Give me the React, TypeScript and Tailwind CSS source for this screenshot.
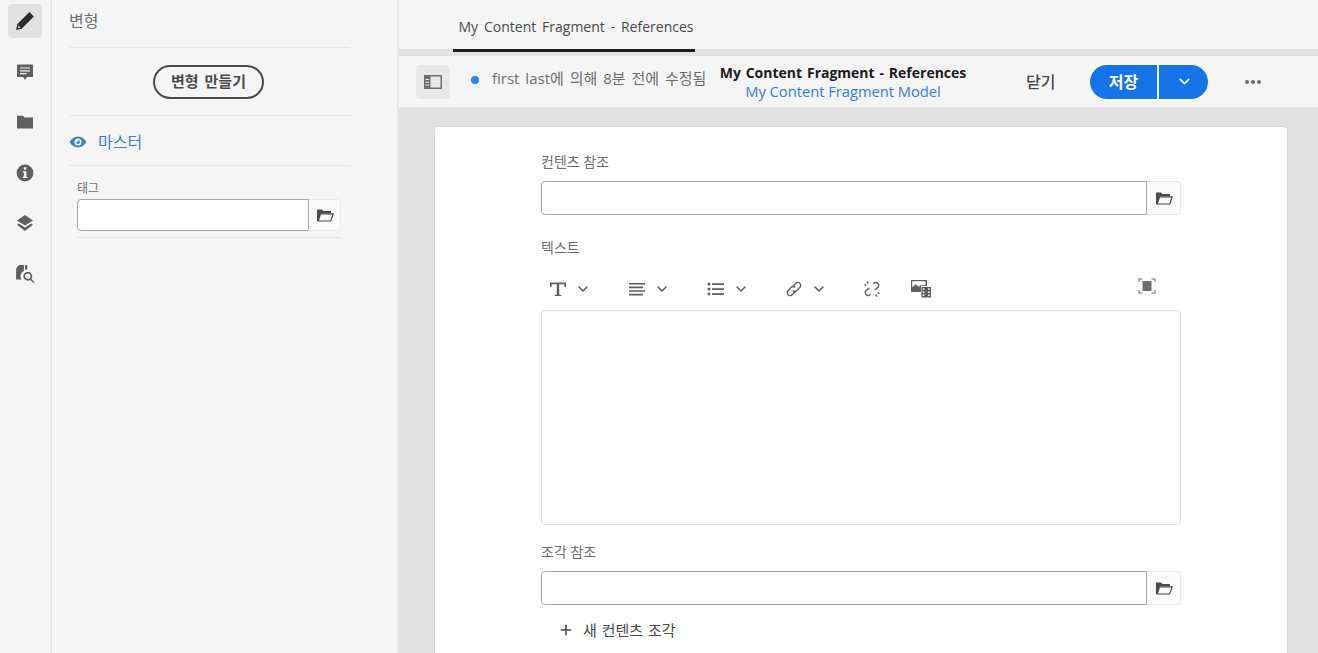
import { ChevronDown, Plus } from "lucide-react";
import type { ReactNode } from "react";

const font = "font-['Open_Sans','Noto_Sans_CJK_KR',sans-serif]";

function Svg({ size = 18, className = "", children }: { size?: number; className?: string; children: ReactNode }) {
  return (
    <svg width={size} height={size} viewBox="0 0 18 18" fill="currentColor" className={className}>
      {children}
    </svg>
  );
}

function FolderOpen({ className = "" }: { className?: string }) {
  return (
    <Svg className={className}>
      <path d="M1 15V3.500h5l1.400 1.600H15v2.200H4.600L2.300 15z" />
      <path fillRule="evenodd" d="M4.200 7.200H18L15.200 15.600H1.200zM5 8.400 2.900 14.400h11.400l2-6z" />
    </Svg>
  );
}

function RailIcon({ children, active }: { children: ReactNode; active?: boolean }) {
  return (
    <div className={`flex h-[34px] w-[34px] items-center justify-center rounded ${active ? "bg-[#e1e1e1] text-[#2c2c2c]" : "text-[#5f5f5f]"}`}>
      {children}
    </div>
  );
}

function Rail() {
  return (
    <div className="flex w-[52px] shrink-0 flex-col items-center gap-[16.6px] border-r-2 border-[#e8e8e8] pt-[4px]">
      <RailIcon active>
        <Svg size={20}>
          <path d="M13 1 17 5 6 16 1 17 2 12zM3.200 13l-.6 2.400 2.400-.6z" />
        </Svg>
      </RailIcon>
      <RailIcon>
        <Svg>
          <path fillRule="evenodd" d="M1 1.500h16V14h-6l-2 3-2-3H1zM4 4.400v1.200h10V4.400zM4 7.200v1.200h10V7.200zM4 10v1.200h6.500V10z" />
        </Svg>
      </RailIcon>
      <RailIcon>
        <Svg>
          <path d="M1 15.500V2.800h6l1.600 1.800H17v10.900z" />
        </Svg>
      </RailIcon>
      <RailIcon>
        <Svg>
          <path fillRule="evenodd" d="M9 .600a8.400 8.400 0 1 1 0 16.800A8.400 8.400 0 0 1 9 .600zM7.800 3.200v2.500h2.500V3.200zM6.800 7.200v1.400h1.100v4.100H6.800v1.400h4.600v-1.400h-1V7.200z" />
        </Svg>
      </RailIcon>
      <RailIcon>
        <Svg>
          <path d="M9 1 17 6.400 9 11.600 1 6.400z" />
          <path d="M2.800 9.400 9 13.400l6.200-4L17 10.800 9 17 1 10.800z" />
        </Svg>
      </RailIcon>
      <RailIcon>
        <Svg size={20}>
          <path d="M3.500 1H8v5.200A5.600 5.600 0 0 0 5.600 14H1V4z" />
          <path d="M9 1h2v4h-2z" />
          <path fillRule="evenodd" d="M11.500 7a4 4 0 0 1 3.200 6.400l2.800 2.800-1 1-2.900-2.800A4 4 0 1 1 11.500 7zm0 1.500a2.500 2.500 0 1 0 0 5 2.500 2.500 0 0 0 0-5z" />
        </Svg>
      </RailIcon>
    </div>
  );
}

function TextField({ heightClass = "h-[34px]", folderClass = "w-[34px]" }: { heightClass?: string; folderClass?: string }) {
  return (
    <div className={`flex ${heightClass}`}>
      <div className="min-w-0 flex-1 rounded-l-[4px] border border-[#a8a8a8] bg-white" />
      <div className={`flex ${folderClass} items-center justify-center rounded-r-[4px] border border-l-0 border-[#eaeaea] bg-[#fafafa] text-[#4b4b4b]`}>
        <FolderOpen />
      </div>
    </div>
  );
}

function Sidebar() {
  return (
    <div className="flex w-[347px] shrink-0 flex-col border-r-2 border-[#e8e8e8] pl-[17px]">
      <div className="w-[281px]">
        <div className="flex h-[48px] items-start border-b border-[#e8e8e8] pt-[10px] text-[16px] leading-[22px] text-[#6e6e6e]">변형</div>
        <div className="flex h-[68px] items-center justify-center border-b border-[#e8e8e8]">
          <div className="-ml-[2px] flex h-[34px] w-[111px] items-center justify-center rounded-full border-2 border-[#4b4b4b] text-[15px] font-bold whitespace-nowrap text-[#4b4b4b] [word-spacing:2px]">
            변형 만들기
          </div>
        </div>
        <div className="flex h-[50px] items-center gap-[11px] border-b border-[#e8e8e8] pt-[2px] text-[16px] text-[#3a7fdc]">
          <Svg size={18}>
            <path fillRule="evenodd" d="M9 3.500c3.600 0 6.600 2.300 8.400 5.500-1.800 3.200-4.800 5.500-8.400 5.500S2.400 12.200.600 9C2.400 5.800 5.400 3.500 9 3.500zM9 5.400A3.600 3.600 0 1 0 9 12.600 3.600 3.600 0 0 0 9 5.400zM9 7a2 2 0 1 1-2 2c.6.400 1.400.300 1.800-.200.400-.500.500-1.200.200-1.800z" />
          </Svg>
          마스터
        </div>
        <div className="ml-[8px] w-[264px] border-b border-[#e8e8e8] pb-[6px]">
          <div className="pt-[15px] pb-[2px] text-[12px] leading-[16px] text-[#6e6e6e]">태그</div>
          <TextField heightClass="h-[32px]" folderClass="w-[32px]" />
        </div>
      </div>
    </div>
  );
}

function TopBars() {
  return (
    <>
      <div className="h-[49px] bg-[#f5f5f5] pl-[54px]">
        <div className="relative z-10 flex h-[52px] w-[242px] items-start justify-center border-b-[3px] border-[#1c1c1c] pt-[17px] pl-[4px] text-[14px] leading-[20px] whitespace-nowrap text-[#4b4b4b] [word-spacing:2.2px]">
          My Content Fragment - References
        </div>
      </div>
      <div className="h-[7px] bg-[#e1e1e1]" />
      <div className="flex h-[52px] items-center border-b border-[#e8e8e8] bg-[#f5f5f5] pl-[17px]">
        <div className="flex h-[34px] w-[34px] items-center justify-center rounded bg-[#e8e8e8] text-[#6e6e6e]">
          <svg width="20" height="16" viewBox="0 0 20 16" fill="currentColor">
            <path fillRule="evenodd" d="M1 1h18v14H1zM7.500 2.500v11H17.500v-11z" />
            <path fill="#e8e8e8" d="M2.500 5h3.500v1H2.500zM2.500 7.800h3.500v1H2.500zM2.500 10.600h3.500v1H2.500z" />
          </svg>
        </div>
        <div className="-mt-[4px] ml-[21px] h-[8px] w-[8px] rounded-full bg-[#2f80ed]" />
        <div className="-mt-[7px] ml-[13px] w-[227px] text-[15px] whitespace-nowrap text-[#6e6e6e] [word-spacing:2px]">first last에 의해 8분 전에 수정됨</div>
        <div className="w-[248px] text-center leading-[19px]">
          <div className="text-[14px] font-bold whitespace-nowrap text-[#1c1c1c] [word-spacing:1.2px]">My Content Fragment - References</div>
          <div className="text-[14.7px] whitespace-nowrap text-[#2f80ed]">My Content Fragment Model</div>
        </div>
        <div className="ml-[59px] w-[30px] text-[16px] font-medium whitespace-nowrap text-[#4b4b4b]">닫기</div>
        <div className="ml-[34px] flex h-[34px] w-[118px] text-white">
          <div className="flex w-[67px] items-center justify-center rounded-l-full bg-[#1473e6] text-[16px] font-bold">저장</div>
          <div className="ml-[1.5px] flex flex-1 items-center justify-center rounded-r-full bg-[#1473e6] pl-[3px]">
            <ChevronDown size={17} strokeWidth={2.5} />
          </div>
        </div>
        <div className="ml-[37px] flex gap-[2px]">
          <span className="h-[4px] w-[4px] rounded-full bg-[#6e6e6e]" />
          <span className="h-[4px] w-[4px] rounded-full bg-[#6e6e6e]" />
          <span className="h-[4px] w-[4px] rounded-full bg-[#6e6e6e]" />
        </div>
      </div>
    </>
  );
}

function ToolGroup({ children, className = "" }: { children: ReactNode; className?: string }) {
  return (
    <div className={`flex items-center gap-[8px] text-[#5f5f5f] ${className}`}>
      {children}
      <ChevronDown size={16} strokeWidth={2.4} />
    </div>
  );
}

function Toolbar() {
  return (
    <div className="flex h-[52px] items-center pt-[9px] pl-[8px] pr-[25px]">
      <ToolGroup className="w-[79px]">
        <Svg>
          <path d="M1 2.500h16v4.600h-1.300L15 4.200h-4.800v10.200l2 .7v1H5.800v-1l2-.7V4.200H3L2.300 7.100H1z" />
        </Svg>
      </ToolGroup>
      <ToolGroup className="w-[79px]">
        <Svg>
          <path d="M1 3h16v1.600H1zM1 6.600h14v1.600H1zM1 10.200h16v1.600H1zM1 13.800h14v1.600H1z" />
        </Svg>
      </ToolGroup>
      <ToolGroup className="w-[78px]">
        <Svg>
          <path d="M5 3.200h12v1.800H5zM5 8.200h12v1.800H5zM5 13.200h12v1.800H5z" />
          <circle cx="2" cy="4" r="1.500" />
          <circle cx="2" cy="9" r="1.500" />
          <circle cx="2" cy="14" r="1.500" />
        </Svg>
      </ToolGroup>
      <ToolGroup className="w-[78px]">
        <Svg>
          <g fill="none" stroke="currentColor" strokeWidth="1.400">
            <path d="M7.500 6.500 11.500 2.700a3 3 0 0 1 4 4L12 10.500a3 3 0 0 1-4.200 0" />
            <path d="M10.500 11.500 6.500 15.300a3 3 0 0 1-4-4L6 7.500a3 3 0 0 1 4.200 0" />
          </g>
        </Svg>
      </ToolGroup>
      <div className="flex w-[47px] text-[#5f5f5f]">
        <Svg>
          <g fill="none" stroke="currentColor" strokeWidth="1.400">
            <path d="M10.500 3.800 11.800 2.700a3 3 0 0 1 3.800 3.900L13.500 8.800a3 3 0 0 1-2 1" />
            <path d="M7.500 14.200 6.200 15.300a3 3 0 0 1-3.800-3.900L4.500 9.200a3 3 0 0 1 2-1" />
            <path d="M4 1.500 5.300 3.500M1.500 4.500 3.500 5.300M14 16.500 12.700 14.500M16.500 13.500 14.500 12.700" />
          </g>
        </Svg>
      </div>
      <div className="text-[#5f5f5f]">
        <svg width="22" height="20" viewBox="0 0 22 20" fill="currentColor">
          <path fillRule="evenodd" d="M1 1h16v6h-6v6H1zM2.200 2.200v6l3.500-3 3 2.500 2-1.500 4.800.1V2.200z" />
          <path fillRule="evenodd" d="M11.500 8H21v10.500h-9.500zM12.800 9.200v1.500h1.500V9.200zM18.200 9.200v1.500h1.500V9.200zM12.800 12.400v1.500h1.500v-1.500zM18.200 12.400v1.500h1.500v-1.500zM12.800 15.600v1.500h1.500v-1.500zM18.200 15.600v1.500h1.500v-1.500z" />
        </svg>
      </div>
      <div className="ml-auto -mt-[6px] text-[#6e6e6e]">
        <svg width="18" height="16" viewBox="0 0 18 16" fill="currentColor">
          <path d="M4.500 3h9v10h-9z" />
          <path d="M.500.500h4v1H1.500v2.500h-1zM13.500.500h4v3.500h-1V1.500h-3zM.500 12h1v2.500h3v1h-4zM16.500 12h1v3.500h-4v-1h3z" />
        </svg>
      </div>
    </div>
  );
}

function Card() {
  return (
    <div className="ml-[35px] h-[600px] w-[854px] rounded-t-[4px] border border-[#d6d6d6] bg-white pl-[106px] pr-[106px]">
      <div className="pt-[25px] pb-[9px] text-[14px] leading-[20px] text-[#6e6e6e]">컨텐츠 참조</div>
      <TextField />
      <div className="pt-[23px] text-[14px] leading-[20px] text-[#6e6e6e]">텍스트</div>
      <Toolbar />
      <div className="h-[215px] rounded-[4px] border border-[#e1e1e1] bg-white" />
      <div className="pt-[17px] pb-[9px] text-[14px] leading-[20px] text-[#6e6e6e]">조각 참조</div>
      <TextField />
      <div className="flex items-center gap-[9px] pt-[14px] pl-[17px] text-[15px] leading-[22px] text-[#4b4b4b] [word-spacing:1px]">
        <Plus size={16} strokeWidth={2.4} />
        새 컨텐츠 조각
      </div>
    </div>
  );
}

export default function App() {
  return (
    <div className={`flex h-[653px] w-[1318px] overflow-hidden bg-[#f5f5f5] ${font}`}>
      <Rail />
      <Sidebar />
      <div className="flex min-w-0 flex-1 flex-col">
        <TopBars />
        <div className="flex-1 overflow-hidden bg-[#e1e1e1] pt-[18px]">
          <Card />
        </div>
      </div>
    </div>
  );
}
